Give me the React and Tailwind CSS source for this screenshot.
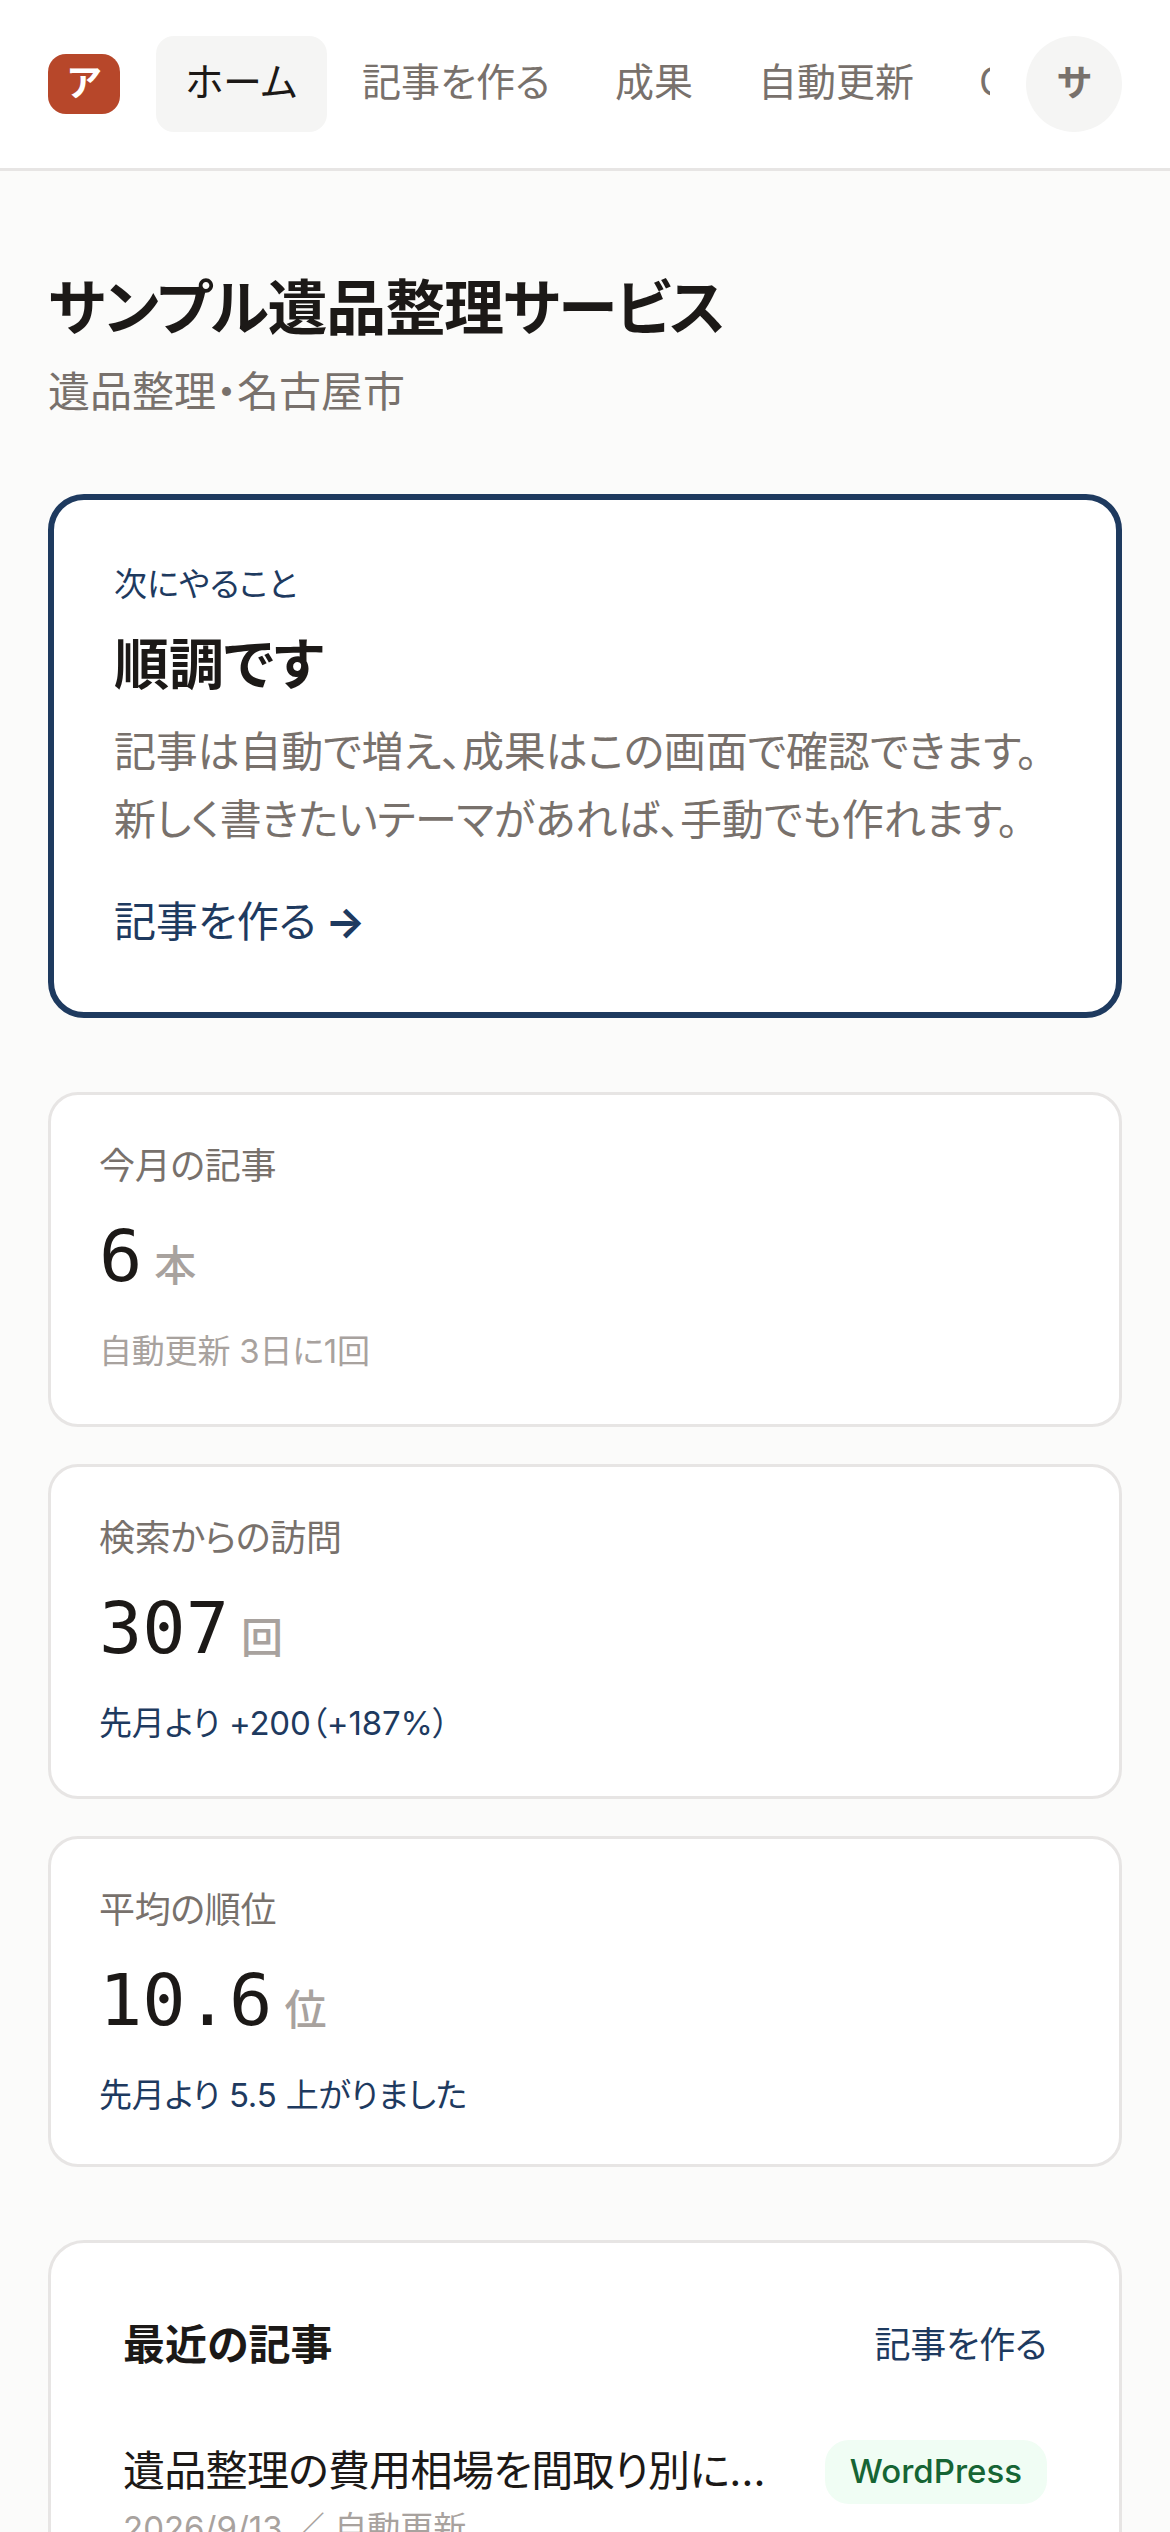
const navItems = ['ホーム', '記事を作る', '成果', '自動更新', 'Google連携'];

const stats = [
  { label: '今月の記事', value: '6', unit: '本', note: '自動更新 3日に1回', noteColor: 'text-[#a8a29e]', height: 'h-[335px]' },
  { label: '検索からの訪問', value: '307', unit: '回', note: '先月より +200（+187%）', noteColor: 'text-[#1e3a5f]', height: 'h-[335px]' },
  { label: '平均の順位', value: '10.6', unit: '位', note: '先月より 5.5 上がりました', noteColor: 'text-[#1e3a5f]', height: 'h-[331px]' },
];

function Header() {
  return (
    <header className="flex items-center gap-9 h-[171px] px-12 bg-white border-b-[3px] border-[#e7e5e4]">
      <div className="flex items-center justify-center shrink-0 w-[72px] h-[60px] pb-[3px] rounded-[18px] bg-[#b7472a] text-white text-[36px] font-bold leading-none">
        ア
      </div>
      <nav className="flex flex-1 min-w-0 gap-1.5 overflow-hidden">
        {navItems.map((item, index) => (
          <div
            key={index}
            className={`shrink-0 flex items-center h-24 px-[29.5px] pb-[3px] rounded-[18px] text-[39px] ${
              index === 0 ? 'bg-[#f5f5f4] text-[#1c1917]' : 'text-[#78716c]'
            }`}
          >
            {item}
          </div>
        ))}
      </nav>
      <div className="flex items-center justify-center shrink-0 w-24 h-24 pb-[3px] rounded-full bg-[#f5f5f4] text-[#78716c] text-[36px] font-bold">
        サ
      </div>
    </header>
  );
}

function NextAction() {
  return (
    <section className="mt-[72px] h-[524px] px-[60px] pt-[60px] bg-white border-[6px] border-[#1e3a5f] rounded-[36px]">
      <p className="text-[33px] leading-[48px] text-[#1e3a5f]">次にやること</p>
      <h2 className="mt-5 text-[55px] leading-[72px] font-bold text-[#1c1917]">順調です</h2>
      <p className="mt-[18px] text-[42px] leading-[68px] tracking-[-0.2px] text-[#78716c]">
        記事は自動で増え、成果はこの画面で確認できます。
        <br />
        新しく書きたいテーマがあれば、手動でも作れます。
      </p>
      <p className="mt-[35px] text-[42px] leading-[66px] text-[#1e3a5f]">
        記事を作る <span className="ml-[-3px] font-bold">→</span>
      </p>
    </section>
  );
}

function StatCard({ label, value, unit, note, noteColor, height }) {
  return (
    <div className={`${height} px-12 pt-[47px] bg-white border-[3px] border-[#e7e5e4] rounded-[30px]`}>
      <p className="text-[36px] leading-[48px] tracking-[-0.3px] text-[#78716c]">{label}</p>
      <div className="flex items-baseline gap-3 mt-6">
        <span className="font-['DejaVu_Sans_Mono',monospace] text-[72px] leading-[84px] text-[#1c1917]">{value}</span>
        <span className="text-[42px] leading-none font-medium text-[#a8a29e]">{unit}</span>
      </div>
      <p className={`mt-[29px] text-[33px] leading-[48px] tracking-[-0.2px] ${noteColor}`}>{note}</p>
    </div>
  );
}

function RecentArticles() {
  return (
    <section className="mt-[73px] px-[72px] pt-[69px] pb-12 bg-white border-[3px] border-[#e7e5e4] rounded-[36px]">
      <div className="flex items-center justify-between">
        <h2 className="text-[42px] leading-[66px] font-bold text-[#1c1917]">最近の記事</h2>
        <span className="text-[36px] tracking-[-0.2px] text-[#1e3a5f]">記事を作る</span>
      </div>
      <div className="flex items-start justify-between mt-[62px]">
        <div className="min-w-0 pt-px">
          <p className="w-[650px] truncate text-[42px] leading-[60px] tracking-[-0.7px] text-[#1c1917]">
            遺品整理の費用相場を間取り別に解説します
          </p>
          <p className="mt-[3px] text-[33px] leading-[48px] text-[#a8a29e]">2026/9/13 ／ 自動更新</p>
        </div>
        <span className="flex items-center h-[64px] px-[25px] rounded-[24px] bg-[#f0fdf4] text-[#166534] text-[33px] font-medium">
          WordPress
        </span>
      </div>
    </section>
  );
}

export default function App() {
  return (
    <div className="h-[2532px] overflow-hidden bg-[#fbfbfa] font-['Inter','Noto_Sans_CJK_JP',sans-serif] [font-feature-settings:'palt']">
      <Header />
      <main className="px-12">
        <h1 className="mt-[95px] text-[60px] leading-[84px] tracking-[-0.02em] font-bold text-[#1c1917]">サンプル遺品整理サービス</h1>
        <p className="mt-3 text-[42px] leading-[60px] text-[#78716c]">遺品整理・名古屋市</p>
        <NextAction />
        <div className="flex flex-col gap-[37px] mt-[74px]">
          {stats.map(stat => (
            <StatCard key={stat.label} {...stat} />
          ))}
        </div>
        <RecentArticles />
      </main>
    </div>
  );
}
